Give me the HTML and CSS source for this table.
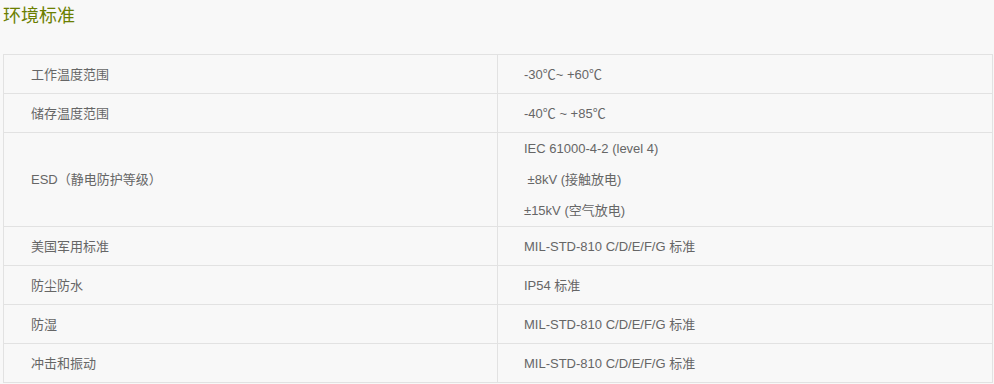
FILE: index.html
```html
<!DOCTYPE html>
<html lang="zh-CN">
<head>
<meta charset="utf-8">
<title>环境标准</title>
<link rel="stylesheet" href="styles.css">
</head>
<body>
<h2 class="title">环境标准</h2>
<div class="spec">
  <div class="cell key">工作温度范围</div>
  <div class="cell val">-30℃~ +60℃</div>
  <div class="cell key">储存温度范围</div>
  <div class="cell val">-40℃ ~ +85℃</div>
  <div class="cell key tall">ESD（静电防护等级）</div>
  <div class="cell val tall multi">
    <p class="line">IEC 61000-4-2 (level 4)</p>
    <p class="line">&nbsp;±8kV (接触放电)</p>
    <p class="line">±15kV (空气放电)</p>
  </div>
  <div class="cell key">美国军用标准</div>
  <div class="cell val">MIL-STD-810 C/D/E/F/G 标准</div>
  <div class="cell key">防尘防水</div>
  <div class="cell val">IP54 标准</div>
  <div class="cell key">防湿</div>
  <div class="cell val">MIL-STD-810 C/D/E/F/G 标准</div>
  <div class="cell key">冲击和振动</div>
  <div class="cell val">MIL-STD-810 C/D/E/F/G 标准</div>
</div>
</body>
</html>
```
FILE: styles.css
```css
html, body {
  margin: 0;
  padding: 0;
  background: #f8f8f8;
}
body {
  font-family: "Liberation Sans", Arial, "Noto Sans CJK SC", sans-serif;
  color: #666;
  font-size: 13px;
}
.title {
  margin: 0 0 22px 0;
  padding-left: 3px;
  height: 32px;
  line-height: 32px;
  font-size: 18px;
  font-weight: normal;
  color: #6b7f00;
}
.spec {
  margin-left: 3px;
  width: 989px;
  display: grid;
  grid-template-columns: 494px 495px;
  border-top: 1px solid #e2e2e2;
  border-left: 1px solid #e2e2e2;
}
.cell {
  box-sizing: border-box;
  height: 39px;
  padding-bottom: 2px;
  display: flex;
  align-items: center;
  border-right: 1px solid #e2e2e2;
  border-bottom: 1px solid #e2e2e2;
  white-space: pre;
}
.key { padding-left: 27px; }
.val { padding-left: 26px; }
.tall { height: 94px; }
.multi {
  flex-direction: column;
  align-items: flex-start;
  justify-content: center;
  padding-bottom: 1px;
}
.line {
  margin: 0;
  height: 31px;
  line-height: 31px;
}
```
